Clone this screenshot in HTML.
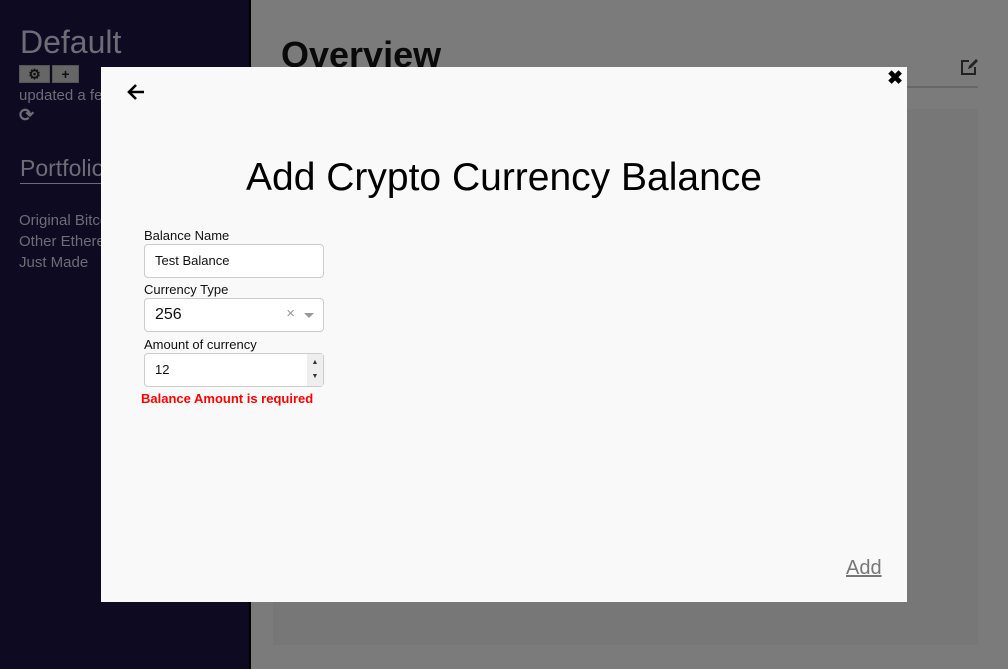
<!DOCTYPE html>
<html><head><meta charset="utf-8"><style>
*{box-sizing:border-box;margin:0;padding:0}
body{width:1008px;height:669px;overflow:hidden;font-family:"Segoe UI","Liberation Sans",sans-serif;background:#7b7b7b;position:relative}
.side{position:absolute;left:0;top:0;width:251px;height:669px;background:#0e0a22;border-right:2px solid #000}
.side .t{position:absolute;left:20px;top:24px;font-size:32px;color:#6e6c76}
.btns{position:absolute;left:19px;top:65px;display:flex}
.btns div{width:31px;height:18px;background:#666;border:1px solid #555;margin-right:2px;color:#111;font-size:14px;font-weight:bold;text-align:center;line-height:16px}
.btns div+div{width:27px}
.side .u{position:absolute;left:19px;top:87px;font-size:15px;color:#6e6c76}
.side .r{position:absolute;left:19px;top:105px;font-size:18px;font-weight:bold;color:#6e6c76}
.side .p{position:absolute;left:20px;top:155px;font-size:23px;color:#6e6c76;border-bottom:1px solid #6e6c76;width:90px;padding-bottom:1px}
.side .l{position:absolute;left:19px;top:210px;font-size:15px;color:#6e6c76;line-height:21px}
.main{position:absolute;left:253px;top:0;right:0;bottom:0}
.ov{position:absolute;left:28px;top:34px;font-size:36px;font-weight:bold;color:#0a0a0a}
.hr{position:absolute;left:28px;top:86px;width:697px;height:2px;background:#666}
.panel{position:absolute;left:20px;top:109px;width:705px;height:536px;background:#777}
.modal{position:absolute;left:101px;top:67px;width:806px;height:535px;background:#f9f9f9}
.x{position:absolute;right:4px;top:0;font-size:19px;font-weight:bold;color:#000}
h1{position:absolute;left:0;width:100%;top:89px;text-align:center;font-weight:normal;font-size:39px;color:#000}
.lab{position:absolute;left:43px;font-size:13px;color:#111}
.inp{position:absolute;left:43px;width:180px;height:34px;border:1px solid #ccc;border-radius:4px;background:#fff;font-size:13px;padding:8px 10px;color:#111}
.err{position:absolute;left:40px;top:324px;font-size:13px;font-weight:bold;color:#f00}
.add{position:absolute;left:745px;top:490px;font-size:20px;color:#777;text-decoration:underline}
</style></head><body>
<div class="side">
<div class="t">Default</div>
<div class="btns"><div>⚙</div><div>+</div></div>
<div class="u">updated a few</div>
<div class="r">⟳</div>
<div class="p">Portfolio</div>
<div class="l">Original Bitcoin<br>Other Ethereum<br>Just Made</div>
</div>
<div class="main">
<div class="ov">Overview</div>
<svg style="position:absolute;left:707px;top:58px" width="19" height="18" viewBox="0 0 19 18"><path d="M9 3H2v13h13V9" stroke="#222" stroke-width="2" fill="none"/><path d="M8 11l1-3 7-7 2 2-7 7z" fill="#222"/></svg>
<div class="hr"></div>
<div class="panel"></div>
</div>
<div class="modal">
<svg style="position:absolute;left:25px;top:16px" width="20" height="18" viewBox="0 0 20 18"><path d="M18 9H3M10 2L3 9l7 7" stroke="#000" stroke-width="2.6" fill="none"/></svg>
<div class="x">✖</div>
<h1>Add Crypto Currency Balance</h1>
<div class="lab" style="top:161px">Balance Name</div>
<div class="inp" style="top:177px">Test Balance</div>
<div class="lab" style="top:215px">Currency Type</div>
<div class="inp" style="top:231px;font-size:16px;padding:7px 10px">256<span style="position:absolute;right:28px;top:6px;color:#999;font-size:15px">×</span><span style="position:absolute;right:9px;top:14px;border:5px solid transparent;border-top:5px solid #999"></span></div>
<div class="lab" style="top:270px">Amount of currency</div>
<div class="inp" style="top:286px">12<span style="position:absolute;right:0;top:0;width:16px;height:32px;background:#eee;font-size:7px;color:#333;text-align:center;line-height:14px;padding-top:2px">▲<br>▼</span></div>
<div class="err">Balance Amount is required</div>
<div class="add">Add</div>
</div>
</body></html>
